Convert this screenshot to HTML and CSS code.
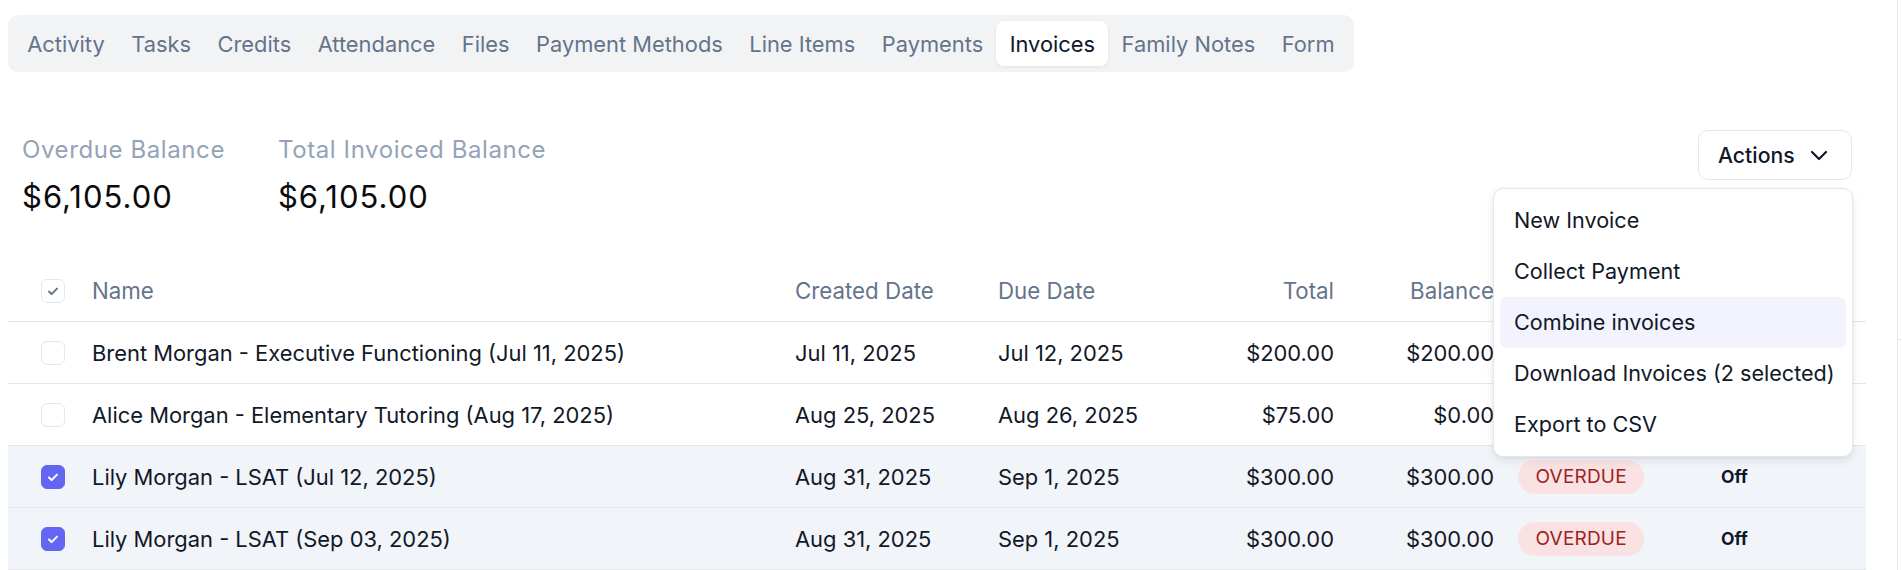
FILE: index.html
```html
<!DOCTYPE html>
<html lang="en">
<head>
<meta charset="utf-8">
<title>Invoices</title>
<link rel="stylesheet" href="styles.css">
</head>
<body>
<div class="page">
  <main class="main">
    <nav class="tabs">
      <span class="tab">Activity</span>
      <span class="tab">Tasks</span>
      <span class="tab">Credits</span>
      <span class="tab">Attendance</span>
      <span class="tab">Files</span>
      <span class="tab">Payment Methods</span>
      <span class="tab">Line Items</span>
      <span class="tab">Payments</span>
      <span class="tab active">Invoices</span>
      <span class="tab">Family Notes</span>
      <span class="tab">Form</span>
    </nav>

    <section class="summary">
      <div class="stats">
        <div class="stat">
          <div class="stat-label">Overdue Balance</div>
          <div class="stat-value">$6,105.00</div>
        </div>
        <div class="stat">
          <div class="stat-label">Total Invoiced Balance</div>
          <div class="stat-value">$6,105.00</div>
        </div>
      </div>
      <div class="actions">
        <button class="actions-btn">Actions
          <svg class="chev" viewBox="0 0 24 24" width="24" height="24"><path d="M5 9l7 7 7-7" fill="none" stroke="currentColor" stroke-width="2.2" stroke-linecap="round" stroke-linejoin="round"/></svg>
        </button>
        <div class="menu">
          <div class="menu-item">New Invoice</div>
          <div class="menu-item">Collect Payment</div>
          <div class="menu-item hover">Combine invoices</div>
          <div class="menu-item">Download Invoices (2 selected)</div>
          <div class="menu-item">Export to CSV</div>
        </div>
      </div>
    </section>

    <table class="grid">
      <colgroup>
        <col class="c-check"><col class="c-name"><col class="c-created"><col class="c-due"><col class="c-total"><col class="c-bal"><col class="c-status"><col class="c-auto">
      </colgroup>
      <thead>
        <tr>
          <th class="chk"><span class="box head-box"><svg viewBox="0 0 16 16" width="16" height="16"><path d="M4 8.5l2.6 2.6L12 5.6" fill="none" stroke="currentColor" stroke-width="2" stroke-linecap="round" stroke-linejoin="round"/></svg></span></th>
          <th>Name</th>
          <th>Created Date</th>
          <th>Due Date</th>
          <th class="num">Total</th>
          <th class="num">Balance</th>
          <th>Status</th>
          <th>Autopay</th>
        </tr>
      </thead>
      <tbody>
        <tr>
          <td class="chk"><span class="box"></span></td>
          <td>Brent Morgan - Executive Functioning (Jul 11, 2025)</td>
          <td>Jul 11, 2025</td>
          <td>Jul 12, 2025</td>
          <td class="num">$200.00</td>
          <td class="num">$200.00</td>
          <td><span class="pill due">DUE</span></td>
          <td class="auto">Off</td>
        </tr>
        <tr>
          <td class="chk"><span class="box"></span></td>
          <td>Alice Morgan - Elementary Tutoring (Aug 17, 2025)</td>
          <td>Aug 25, 2025</td>
          <td>Aug 26, 2025</td>
          <td class="num">$75.00</td>
          <td class="num">$0.00</td>
          <td><span class="pill paid">PAID</span></td>
          <td class="auto">Off</td>
        </tr>
        <tr class="sel">
          <td class="chk"><span class="box on"><svg viewBox="0 0 16 16" width="16" height="16"><path d="M4 8.5l2.6 2.6L12 5.6" fill="none" stroke="currentColor" stroke-width="2" stroke-linecap="round" stroke-linejoin="round"/></svg></span></td>
          <td>Lily Morgan - LSAT (Jul 12, 2025)</td>
          <td>Aug 31, 2025</td>
          <td>Sep 1, 2025</td>
          <td class="num">$300.00</td>
          <td class="num">$300.00</td>
          <td><span class="pill overdue">OVERDUE</span></td>
          <td class="auto">Off</td>
        </tr>
        <tr class="sel">
          <td class="chk"><span class="box on"><svg viewBox="0 0 16 16" width="16" height="16"><path d="M4 8.5l2.6 2.6L12 5.6" fill="none" stroke="currentColor" stroke-width="2" stroke-linecap="round" stroke-linejoin="round"/></svg></span></td>
          <td>Lily Morgan - LSAT (Sep 03, 2025)</td>
          <td>Aug 31, 2025</td>
          <td>Sep 1, 2025</td>
          <td class="num">$300.00</td>
          <td class="num">$300.00</td>
          <td><span class="pill overdue">OVERDUE</span></td>
          <td class="auto">Off</td>
        </tr>
      </tbody>
    </table>
  </main>
  <aside class="rail"><div class="rail-top"></div></aside>
</div>
</body>
</html>
```

FILE: styles.css
```css
* { box-sizing: border-box; }

html, body {
  margin: 0;
  padding: 0;
  background: #ffffff;
  font-family: Inter, "Noto Sans", "Liberation Sans", sans-serif;
  color: #0f172a;
}

.page {
  display: flex;
  min-height: 570px;
}

.main {
  flex: 1;
  padding: 15px 31px 0 8px;
}

.rail {
  width: 5px;
  border-left: 1px solid #e5e7eb;
}

.rail-top {
  height: 340px;
  border-bottom: 1px solid #e5e7eb;
}

/* Tabs */
.tabs {
  display: inline-flex;
  align-items: center;
  background: #f2f3f5;
  border-radius: 10px;
  padding: 6px;
}

.tab {
  height: 45px;
  display: flex;
  align-items: center;
  padding: 0 13.25px;
  font-size: 21.85px;
  color: #64748b;
  border-radius: 8px;
  white-space: nowrap;
}

.tab.active {
  background: #ffffff;
  color: #0f172a;
  box-shadow: 0 1px 3px rgba(15, 23, 42, 0.08);
}

/* Summary */
.summary {
  display: flex;
  justify-content: space-between;
  align-items: flex-start;
  margin-top: 58px;
  padding: 0 14px;
}

.stats {
  display: flex;
  gap: 53px;
  padding-top: 6px;
}

.stat-label {
  font-size: 24px;
  line-height: 28px;
  letter-spacing: 0.6px;
  color: #94a3b8;
}

.stat-value {
  margin-top: 15px;
  font-size: 31px;
  line-height: 36px;
  letter-spacing: 1px;
  color: #0a0a0a;
}

.actions {
  position: relative;
}

.actions-btn {
  display: flex;
  align-items: center;
  gap: 12px;
  height: 50px;
  width: 154px;
  padding: 0 0 0 19px;
  background: #ffffff;
  border: 1px solid #e2e8f0;
  border-radius: 10px;
  font-family: inherit;
  font-size: 21.2px;
  font-weight: 500;
  color: #0f172a;
}

.chev { color: #0f172a; }

.menu {
  position: absolute;
  top: 58px;
  right: -1px;
  width: 360px;
  padding: 6px;
  background: #ffffff;
  border: 1px solid #e5e7eb;
  border-radius: 10px;
  box-shadow: 0 4px 10px rgba(15, 23, 42, 0.08), 0 1px 3px rgba(15, 23, 42, 0.06);
  z-index: 5;
}

.menu-item {
  height: 51px;
  line-height: 51px;
  padding: 0 14px;
  font-size: 21.6px;
  color: #111827;
  border-radius: 7px;
  white-space: nowrap;
}

.menu-item.hover {
  background: #f2f3fd;
}

/* Table */
.grid {
  width: 1858px;
  margin-top: 45px;
  border-collapse: separate;
  border-spacing: 0;
  table-layout: fixed;
}

.c-check { width: 72px; }
.c-name { width: 703px; }
.c-created { width: 203px; }
.c-due { width: 200px; }
.c-total { width: 160px; }
.c-bal { width: 160px; }
.c-status { width: 203px; }
.c-auto { width: 157px; }

.grid th,
.grid td {
  height: 62px;
  padding: 0 12px;
  border-bottom: 1px solid #e5e7eb;
  text-align: left;
  vertical-align: middle;
  white-space: nowrap;
}

.grid th {
  font-size: 22.3px;
  font-weight: 400;
  color: #64748b;
}

.grid td {
  font-size: 21.9px;
  color: #111827;
}

.grid .num { text-align: right; }

.grid .chk { padding-left: 33px; padding-right: 0; }

.grid tr.sel td { background: #f1f4f9; }

.box {
  display: flex;
  align-items: center;
  justify-content: center;
  width: 24px;
  height: 24px;
  border: 1px solid #e2e8f0;
  border-radius: 6px;
  background: #ffffff;
}

.head-box { color: #64748b; }

.box.on {
  background: #6366f1;
  border-color: #6366f1;
  color: #ffffff;
}

.pill {
  display: inline-flex;
  align-items: center;
  height: 34px;
  padding: 0 17.5px;
  border-radius: 17px;
  font-size: 19px;
  letter-spacing: 0.01em;
}

.pill.overdue { background: #fbe2e2; color: #9b2323; }
.pill.due { background: #fef3c7; color: #92400e; }
.pill.paid { background: #dcfce7; color: #166534; }

.grid td.auto {
  font-size: 17.5px;
  font-weight: 700;
  color: #0f172a;
}
```
